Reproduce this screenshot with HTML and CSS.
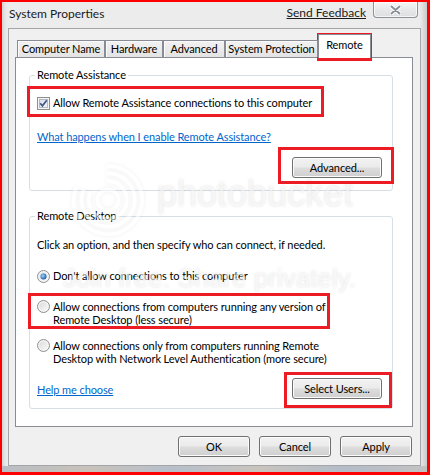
FILE: index.html
```html
<!DOCTYPE html>
<html lang="en">
<head>
<meta charset="utf-8">
<title>System Properties</title>
<link rel="stylesheet" href="styles.css">
</head>
<body>
<div class="shot">
  <div class="window">
    <div class="titlebar">
      <span class="title">System Properties</span>
      <a class="feedback" href="#">Send Feedback</a>
      <span class="close" aria-label="Close">
        <svg width="11" height="10" viewBox="0 0 11 10">
          <path d="M1.5 1.5 L9.5 8.5 M9.5 1.5 L1.5 8.5" stroke="#ffffff" stroke-width="4" stroke-linecap="round"/>
          <path d="M1.5 1.5 L9.5 8.5 M9.5 1.5 L1.5 8.5" stroke="#8b9097" stroke-width="2" stroke-linecap="round"/>
        </svg>
      </span>
    </div>

    <div class="client">
      <div class="tabs">
        <span class="tab t-name">Computer Name</span>
        <span class="tab t-hardware">Hardware</span>
        <span class="tab t-advanced">Advanced</span>
        <span class="tab t-protection">System Protection</span>
        <span class="tab t-remote active">Remote</span>
      </div>

      <div class="panel">
        <fieldset class="group assist">
          <legend>Remote Assistance</legend>
          <label class="option">
            <svg class="box" width="13" height="13" viewBox="0 0 13 13">
              <defs>
                <linearGradient id="cbfill" x1="0" y1="0" x2="1" y2="1">
                  <stop offset="0" stop-color="#d9dde3"/>
                  <stop offset="1" stop-color="#f7f8f9"/>
                </linearGradient>
              </defs>
              <rect x="0.5" y="0.5" width="12" height="12" fill="#f5f5f5" stroke="#8e8f8f"/>
              <rect x="2.5" y="2.5" width="8" height="8" fill="url(#cbfill)" stroke="#b6bac0"/>
              <path d="M3.2 6.3 L5.4 8.8 L9.8 3.2" fill="none" stroke="#3e5591" stroke-width="1.7"/>
            </svg>
            <span>Allow Remote Assistance connections to this computer</span>
          </label>
          <a class="link assist-link" href="#">What happens when I enable Remote Assistance?</a>
          <div class="button-row end">
            <button class="btn wide">Advanced...</button>
          </div>
        </fieldset>

        <fieldset class="group desktop">
          <legend>Remote Desktop</legend>
          <p class="intro">Click an option, and then specify who can connect, if needed.</p>

          <label class="option radio first">
            <svg class="box" width="13" height="13" viewBox="0 0 13 13">
              <defs>
                <linearGradient id="rfill" x1="0" y1="0" x2="1" y2="1">
                  <stop offset="0" stop-color="#dcdcdc"/>
                  <stop offset="1" stop-color="#f8f8f8"/>
                </linearGradient>
                <radialGradient id="rdot" cx="0.4" cy="0.4" r="0.6">
                  <stop offset="0" stop-color="#a9d3f5"/>
                  <stop offset="0.6" stop-color="#4a8fd4"/>
                  <stop offset="1" stop-color="#1c5aa6"/>
                </radialGradient>
              </defs>
              <circle cx="6.5" cy="6.5" r="6" fill="#f4f4f4" stroke="#8e8f8f"/>
              <circle cx="6.5" cy="6.5" r="4" fill="url(#rfill)"/>
              <circle cx="6.5" cy="6.5" r="3" fill="url(#rdot)"/>
            </svg>
            <span>Don't allow connections to this computer</span>
          </label>

          <label class="option radio multi second">
            <svg class="box" width="13" height="13" viewBox="0 0 13 13">
              <circle cx="6.5" cy="6.5" r="6" fill="#f4f4f4" stroke="#8e8f8f"/>
              <circle cx="6.5" cy="6.5" r="4.2" fill="url(#rfill)"/>
            </svg>
            <span>Allow connections from computers running any version of<br>Remote Desktop (less secure)</span>
          </label>

          <label class="option radio multi third">
            <svg class="box" width="13" height="13" viewBox="0 0 13 13">
              <circle cx="6.5" cy="6.5" r="6" fill="#f4f4f4" stroke="#8e8f8f"/>
              <circle cx="6.5" cy="6.5" r="4.2" fill="url(#rfill)"/>
            </svg>
            <span>Allow connections only from computers running Remote<br>Desktop with Network Level Authentication (more secure)</span>
          </label>

          <div class="button-row split">
            <a class="link help" href="#">Help me choose</a>
            <button class="btn wide">Select Users...</button>
          </div>
        </fieldset>
      </div>

      <div class="actions">
        <button class="btn">OK</button>
        <button class="btn">Cancel</button>
        <button class="btn">Apply</button>
      </div>
    </div>
  </div>

  <!-- photo host watermark laid across the dialog -->
  <div class="watermark" aria-hidden="true">
    <svg class="wm-logo" width="76" height="76" viewBox="0 0 80 80">
      <g fill="none" stroke="#ffffff" stroke-width="4" stroke-linecap="round">
        <path d="M40 4 A36 36 0 1 1 6 28"/>
        <path d="M40 12 A28 28 0 1 1 14 30"/>
        <path d="M40 20 A20 20 0 1 1 21 33"/>
        <circle cx="40" cy="40" r="11"/>
      </g>
    </svg>
    <span class="wm-brand">photobucket</span>
    <span class="wm-tag">Join free. Share privately.</span>
  </div>

  <!-- red call-out frames -->
  <span class="mark mark-tab"></span>
  <span class="mark mark-check"></span>
  <span class="mark mark-advanced"></span>
  <span class="mark mark-radio"></span>
  <span class="mark mark-users"></span>
</div>
</body>
</html>
```

FILE: styles.css
```css
* {
  box-sizing: border-box;
}

html,
body {
  margin: 0;
  padding: 0;
}

body {
  width: 430px;
  height: 475px;
  overflow: hidden;
  font: 11px/16px Lato, "Liberation Sans", sans-serif;
  letter-spacing: -0.1px;
  color: #000;
  background: #fff;
}

.shot {
  position: relative;
  width: 430px;
  height: 475px;
  border-style: solid;
  border-color: #ff0000;
  border-width: 2px 3px 3px 2px;
}

/* window frame: glass edges around the client area */
.window {
  display: flex;
  flex-direction: column;
  height: 100%;
  padding: 0 6px 6px 6px;
  background:
    linear-gradient(to right, #b9bdc3, #c8c2ba 20%, #b7bfcb 40%, #c9c4bd 60%, #b4bcc8 80%, #c2c2c2) bottom / 100% 6px no-repeat,
    linear-gradient(to right, #cfd1d3 0, #e6e6e6 3px, #ececec 6px, #ececec calc(100% - 7px), #dcdcdc calc(100% - 4px), #c9cbce 100%);
}

.titlebar {
  flex: none;
  display: flex;
  align-items: flex-start;
  height: 26px;
  font-size: 12px;
  letter-spacing: 0;
}

.title {
  flex: 1;
  margin: 4px 0 0 1px;
  color: #1b1b1b;
}

.feedback {
  margin-top: 3px;
  color: #1b1b1b;
  text-decoration: underline;
}

.close {
  display: flex;
  align-items: center;
  justify-content: center;
  width: 45px;
  height: 16px;
  margin: 0 3px 0 7px;
  border: 1px solid #8d9299;
  border-top: none;
  border-radius: 0 0 4px 4px;
  background: linear-gradient(#f6f6f6, #e6e7e9 55%, #dcdee1);
  box-shadow: inset 0 0 0 1px rgba(255, 255, 255, 0.7);
}

.client {
  flex: 1;
  display: flex;
  flex-direction: column;
  background: #f0f0f0;
  border: 1px solid #a3a5a8;
  padding: 5px 7px 8px 6px;
}

/* tab strip */
.tabs {
  position: relative;
  z-index: 1;
  display: flex;
  align-items: flex-end;
  height: 24px;
  margin-bottom: -1px;
  padding-left: 2px;
}

.tab {
  height: 17px;
  margin-bottom: 1px;
  line-height: 16px;
  text-align: center;
  border: 1px solid #898c95;
  border-bottom: none;
  background: linear-gradient(#f2f2f2, #ebebeb 50%, #e3e3e3);
  box-shadow: inset 1px 1px 0 #fbfbfb;
  white-space: nowrap;
}

.t-name { width: 88px; }
.t-hardware { width: 58px; }
.t-advanced { width: 62px; }
.t-protection { width: 93px; }
.t-remote { width: 53px; }

.tab.active {
  position: relative;
  height: 24px;
  margin-bottom: 0;
  padding-top: 2px;
  background: #fff;
  box-shadow: none;
}

.panel {
  flex: 1;
  background: #fff;
  border: 1px solid #898c95;
  padding: 9px 19px 0 13px;
}

/* group boxes */
.group {
  margin: 0;
  min-width: 0;
  border: 1px solid #d5dfe5;
  border-radius: 3px;
  padding: 12px 10px 12px 7px;
}

.group legend {
  padding: 0 2px;
  margin-left: -2px;
  line-height: 16px;
}

.group.desktop {
  margin-top: 17px;
  padding-top: 13px;
  padding-bottom: 9px;
}

.option {
  display: flex;
  align-items: center;
  height: 16px;
}

.option .box {
  flex: none;
  margin-right: 3px;
}

.option.multi {
  align-items: flex-start;
  height: auto;
  line-height: 13px;
}

.option.first {
  margin-top: 15px;
}

.option.second {
  margin-top: 16px;
}

.option.third {
  margin-top: 13px;
}

.intro {
  margin: 0;
}

.link {
  display: block;
  color: #0066cc;
  text-decoration: underline;
}

.assist-link {
  margin-top: 18px;
}

.button-row {
  display: flex;
  align-items: center;
}

.button-row.end {
  justify-content: flex-end;
  margin-top: 12px;
}

.button-row.split {
  justify-content: space-between;
  margin-top: 13px;
}

.help {
  padding-top: 3px;
}

/* push buttons */
.btn {
  width: 72px;
  height: 21px;
  padding: 0;
  font: inherit;
  letter-spacing: inherit;
  color: #000;
  border: 1px solid #707070;
  border-radius: 3px;
  background: linear-gradient(#f2f2f2, #ebebeb 48%, #dddddd 52%, #cfcfcf);
  box-shadow: inset 0 0 0 1px #fbfbfb;
}

.btn.wide {
  width: 90px;
}

.actions {
  display: flex;
  justify-content: flex-end;
  gap: 9px;
  margin: 9px 1px 0 0;
}

/* watermark */
.watermark {
  position: absolute;
  inset: 0;
  pointer-events: none;
  color: rgba(255, 255, 255, 0.6);
  font-family: "Liberation Sans", Arial, sans-serif;
  letter-spacing: 0;
  text-shadow: 0 0 3px rgba(0, 0, 0, 0.12);
}

.wm-logo {
  position: absolute;
  left: 68px;
  top: 160px;
  filter: drop-shadow(0 0 2px rgba(0, 0, 0, 0.12));
  opacity: 0.5;
}

.wm-brand {
  position: absolute;
  left: 155px;
  top: 172px;
  font-size: 36px;
  line-height: 40px;
}

.wm-tag {
  position: absolute;
  left: 61px;
  top: 261px;
  font-size: 26px;
  line-height: 30px;
}

/* red annotation frames */
.mark {
  position: absolute;
  border: 3px solid #ed1c24;
  pointer-events: none;
}

.mark-tab {
  left: 315px;
  top: 31px;
  width: 55px;
  height: 28px;
}

.mark-check {
  left: 25px;
  top: 84px;
  width: 297px;
  height: 31px;
}

.mark-advanced {
  left: 276px;
  top: 145px;
  width: 116px;
  height: 37px;
}

.mark-radio {
  left: 26px;
  top: 291px;
  width: 302px;
  height: 36px;
}

.mark-users {
  left: 282px;
  top: 370px;
  width: 108px;
  height: 36px;
}
```
